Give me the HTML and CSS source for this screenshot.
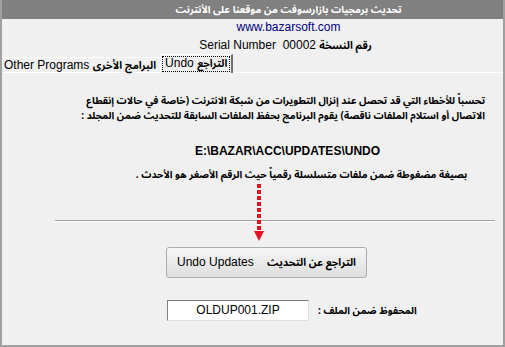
FILE: index.html
```html
<!DOCTYPE html>
<html lang="ar">
<head>
<meta charset="utf-8">
<link rel="stylesheet" href="styles.css">
</head>
<body>
<div class="window">
  <div class="titlebar"><span dir="rtl">تحديث برمجيات بازارسوفت من موقعنا على الأنترنت</span></div>
  <div class="site">www.bazarsoft.com</div>
  <div class="serial" dir="rtl"><span class="ar">رقم النسخة</span> <span dir="ltr">Serial Number&nbsp; 00002</span></div>
  <div class="tabs">
    <div class="tab" dir="rtl"><span class="ar">البرامج الأخرى</span> <span dir="ltr">Other Programs</span></div>
    <div class="tab active" dir="rtl"><span class="focus"><span class="ar">التراجع</span> <span dir="ltr">Undo</span></span></div>
    <div class="tab-rest"></div>
  </div>
  <div class="panel">
    <div class="para" dir="rtl">
      <p>تحسباً للأخطاء التي قد تحصل عند إنزال التطويرات من شبكة الانترنت (خاصة في حالات إنقطاع</p>
      <p>الاتصال أو استلام الملفات ناقصة) يقوم البرنامج بحفظ الملفات السابقة للتحديث ضمن المجلد :</p>
    </div>
    <p class="path">E:\BAZAR\ACC\UPDATES\UNDO</p>
    <p class="note" dir="rtl">بصيغة مضغوطة ضمن ملفات متسلسلة رقمياً حيث الرقم الأصغر هو الأحدث .</p>
    <div class="sep"></div>
    <div class="btn-row">
      <button class="btn" dir="rtl"><span class="ar">التراجع عن التحديث</span>&nbsp;&nbsp;&nbsp; <span dir="ltr">Undo Updates</span></button>
    </div>
    <div class="file-row">
      <div class="input">OLDUP001.ZIP</div>
      <span class="label" dir="rtl">المحفوظ ضمن الملف :</span>
    </div>
    <div class="arrow">
      <div class="dots"></div>
      <div class="head"></div>
    </div>
  </div>
</div>
</body>
</html>
```

FILE: styles.css
```css
* { box-sizing: border-box; }
html, body { margin: 0; padding: 0; background: #f0f0f0; }
body { font-family: "Noto Sans Arabic", "DejaVu Sans", "Liberation Sans", sans-serif; font-size: 11px; color: #000; }

.ar, .para, .note, .label, .titlebar span { font-family: "Noto Sans Arabic", "DejaVu Sans", sans-serif; }

.window {
  width: 505px;
  height: 347px;
  background: #f0f0f0;
  border-left: 2px solid #a0a0a0;
  border-right: 2px solid #a0a0a0;
  border-bottom: 2px solid #a0a0a0;
  display: flex;
  flex-direction: column;
  overflow: hidden;
}

.titlebar {
  height: 19px;
  background: #808080;
  color: #fff;
  font-weight: bold;
  font-size: 10px;
  line-height: 19px;
  text-align: center;
  padding-left: 72px;
  margin: 0 -2px;
  white-space: nowrap;
}

.site {
  font-family: "Liberation Sans", Arial, sans-serif;
  font-size: 12px;
  color: #000080;
  text-align: center;
  padding-left: 72px;
  height: 17px;
  line-height: 17px;
}

.serial {
  font-family: "Liberation Sans", Arial, sans-serif;
  font-size: 12px;
  text-align: center;
  padding-left: 66px;
  height: 18px;
  line-height: 18px;
}
.serial .ar { font-weight: bold; font-size: 10.5px; }

.tabs {
  display: flex;
  align-items: flex-end;
  height: 19px;
}
.tab {
  font-family: "Liberation Sans", Arial, sans-serif;
  font-size: 12px;
  height: 16px;
  line-height: 14px;
  padding: 0 4px 0 4px;
  border-top: 1px solid #fff;
  border-bottom: 1px solid #fff;
  white-space: nowrap;
  margin-left: -2px;
}
.tab .ar { font-weight: bold; font-size: 10.5px; }
.tab.active {
  height: 19px;
  margin-left: 0;
  border-top: 1px solid #fff;
  border-left: 1px solid #fff;
  border-right: 2px solid #707070;
  border-bottom: 0;
  padding: 1px 1px 0 1px;
  line-height: 15px;
}
.focus { border: 1px dotted #000; padding: 0 2px; display: inline-block; line-height: 13px; }
.tab-rest { flex: 1; border-bottom: 1px solid #fff; height: 1px; }

.panel {
  position: relative;
  flex: 1;
  display: flex;
  flex-direction: column;
}
.panel p { margin: 0; }

.para {
  font-weight: bold;
  font-size: 10px;
  line-height: 15px;
  text-align: right;
  white-space: nowrap;
  padding: 0 18px 0 0;
  margin-top: 20px;
}
.para p { height: 15px; }
.path {
  font-family: "Liberation Sans", Arial, sans-serif;
  font-weight: bold;
  font-size: 12px;
  text-align: center;
  padding-left: 70px;
  line-height: 16px;
  margin-top: 20px !important;
}
.note {
  font-weight: bold;
  font-size: 10px;
  text-align: center;
  white-space: nowrap;
  padding-left: 98px;
  line-height: 15px;
  margin-top: 8px !important;
}
.sep {
  height: 2px;
  margin: 38px 8px 0 53px;
  border-top: 1px solid #a0a0a0;
  border-bottom: 1px solid #fff;
}
.btn-row { display: flex; padding-left: 164px; margin-top: 25px; }
.btn {
  width: 201px;
  height: 31px;
  font-family: "Liberation Sans", Arial, sans-serif;
  font-size: 12px;
  color: #000;
  background: linear-gradient(#f6f6f6, #dedede);
  border: 1px solid #acacac;
  border-radius: 3px;
  padding: 0;
  text-align: center;
  white-space: nowrap;
}
.btn .ar { font-weight: bold; font-size: 10.5px; }

.file-row {
  display: flex;
  align-items: center;
  margin-top: 22px;
  padding-left: 165px;
  gap: 9px;
}
.input {
  width: 142px;
  height: 21px;
  background: #fff;
  border-top: 1px solid #808080;
  border-left: 1px solid #808080;
  border-right: 1px solid #e0e0e0;
  border-bottom: 1px solid #e0e0e0;
  font-family: "Liberation Sans", Arial, sans-serif;
  font-size: 12px;
  text-align: center;
  line-height: 19px;
}
.label { font-weight: bold; font-size: 10px; white-space: nowrap; }

.arrow {
  position: absolute;
  left: 252px;
  top: 111px;
  width: 10px;
  display: flex;
  flex-direction: column;
  align-items: center;
}
.dots {
  width: 4px;
  height: 47px;
  background: repeating-linear-gradient(#e8101e 0 4px, transparent 4px 6px);
}
.head {
  width: 0; height: 0;
  border-left: 5px solid transparent;
  border-right: 5px solid transparent;
  border-top: 10px solid #e8101e;
}
```
